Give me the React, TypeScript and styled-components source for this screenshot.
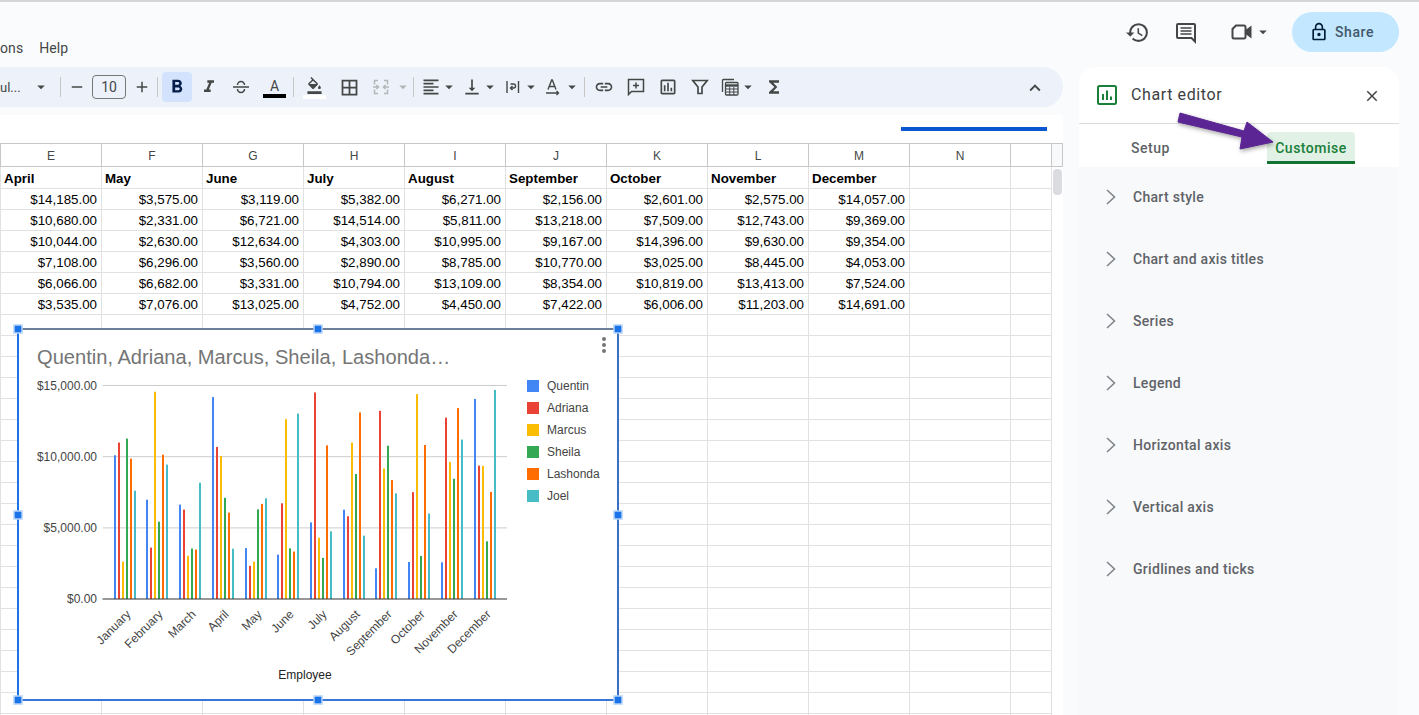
import React from 'react';
import styled, {createGlobalStyle} from 'styled-components';
import {
  MdAdd, MdArrowDropDown, MdBorderAll, MdClose, MdExpandLess, MdFormatAlignLeft,
  MdFormatBold, MdFormatColorFill, MdFormatItalic, MdFunctions, MdHistory, MdLink, MdLockOutline,
  MdOutlineInsertChart, MdRemove, MdVerticalAlignBottom,
} from 'react-icons/md';

const GlobalStyle = createGlobalStyle`
  html, body {
    margin: 0;
    height: 100%;
    overflow: hidden;
    background: #f9fbfd;
    font-family: "Roboto", "Liberation Sans", sans-serif;
  }
`

const Page = styled.div`
  width: 1419px;
  height: 715px;
  display: flex;
  flex-direction: column;
  overflow: hidden;
  border-top: 2px solid #d3d5d8;
  box-sizing: border-box;
  position: relative;
`

const TopBar = styled.div`
  height: 65px;
  flex: none;
  display: flex;
`

const MenuArea = styled.div`
  width: 1079px;
  display: flex;
  align-items: flex-end;
  padding-bottom: 11px;
  box-sizing: border-box;
  font-size: 14px;
  letter-spacing: .1px;
  color: #444746;
  gap: 16px;
`

const Actions = styled.div`
  flex: 1;
  display: flex;
  align-items: flex-start;
  padding: 10px 20px 0 0;
  box-sizing: border-box;
  justify-content: flex-end;
  color: #444746;
`

const ActionIcon = styled.div<{$w: number}>`
  width: ${p => p.$w}px;
  height: 40px;
  display: flex;
  align-items: center;
  font-size: 25px;
`

const ShareButton = styled.div`
  width: 107px;
  height: 40px;
  border-radius: 20px;
  background: #c2e7ff;
  display: flex;
  align-items: center;
  justify-content: center;
  gap: 6px;
  padding-right: 8px;
  box-sizing: border-box;
  font-size: 14px;
  font-weight: 500;
  letter-spacing: .6px;
  color: #41586b;
  svg { color: #001d35; }
`

const Body = styled.div`
  flex: 1;
  display: flex;
  min-height: 0;
`

const Sheet = styled.div`
  width: 1063px;
  flex: none;
  display: flex;
  flex-direction: column;
`

const Toolbar = styled.div`
  height: 40px;
  flex: none;
  background: #edf2fa;
  border-radius: 0 20px 20px 0;
  display: flex;
  align-items: center;
  color: #444746;
  position: relative;
`

const FontName = styled.span`
  width: 33px;
  flex: none;
  font-size: 13px;
`

const Sep = styled.div<{$ml?: number}>`
  width: 1px;
  height: 20px;
  background: #c7c7c7;
  flex: none;
  margin-left: ${p => p.$ml ?? 0}px;
`

const Tool = styled.div<{$w?: number; $ml?: number; $on?: boolean; $off?: boolean}>`
  width: ${p => p.$w ?? 32}px;
  margin-left: ${p => p.$ml ?? 0}px;
  height: 30px;
  flex: none;
  display: flex;
  align-items: center;
  justify-content: center;
  border-radius: 4px;
  font-size: 20px;
  background: ${p => p.$on ? '#d3e3fd' : 'transparent'};
  color: ${p => p.$on ? '#041e49' : p.$off ? '#b4b6b8' : '#444746'};
`

const Caret = styled(MdArrowDropDown)`
  font-size: 18px;
  flex: none;
`

const SizeBox = styled.div`
  width: 34px;
  height: 24px;
  border: 1px solid #747775;
  border-radius: 4px;
  box-sizing: border-box;
  display: flex;
  align-items: center;
  justify-content: center;
  font-size: 14px;
  flex: none;
`

const ColorGlyph = styled.div<{$bar: string}>`
  width: 23px;
  margin-top: 2px;
  display: flex;
  flex-direction: column;
  align-items: center;
  font-size: 14px;
  line-height: 14px;
  color: #444746;
  &::after {
    content: "";
    width: 100%;
    height: 4px;
    background: ${p => p.$bar};
    margin-top: 1px;
  }
`

const Collapse = styled.div`
  position: absolute;
  right: 17px;
  top: 10px;
  font-size: 22px;
  height: 22px;
`

const FormulaBar = styled.div`
  height: 28px;
  margin-top: 8px;
  flex: none;
  background: #fff;
  display: flex;
  align-items: flex-end;
  justify-content: flex-end;
  padding: 0 16px 12px 0;
  box-sizing: border-box;
`

const Progress = styled.div`
  width: 146px;
  height: 4px;
  background: #0b57d0;
`

const GridWrap = styled.div`
  flex: 1;
  position: relative;
  overflow: hidden;
  background: #fff;
  min-height: 0;
`

const HeaderRow = styled.div`
  display: flex;
  height: 24px;
  box-sizing: border-box;
  border-top: 1px solid #c7c7c7;
  border-bottom: 1px solid #c7c7c7;
  border-left: 1px solid #c7c7c7;
`

const HeaderCell = styled.div<{$w?: number; $plain?: boolean}>`
  width: ${p => p.$w ?? 101}px;
  flex: none;
  box-sizing: border-box;
  border-right: 1px solid #c7c7c7;
  font: 12px "Liberation Sans", sans-serif;
  color: #444746;
  line-height: 24px;
  text-align: center;
  background: ${p => p.$plain ? '#f8f9fa' : '#fff'};
`

const Row = styled.div<{$h?: number}>`
  display: flex;
  height: ${p => p.$h ?? 21}px;
  box-sizing: border-box;
  border-bottom: 1px solid #e1e1e1;
  border-left: 1px solid #e1e1e1;
`

const Cell = styled.div<{$bold?: boolean; $w?: number}>`
  width: ${p => p.$w ?? 101}px;
  flex: none;
  box-sizing: border-box;
  border-right: 1px solid #e1e1e1;
  padding: 0 4px 0 3px;
  font: ${p => p.$bold ? 'bold' : 'normal'} 13.33px "Liberation Sans", sans-serif;
  color: #000;
  line-height: ${p => p.$bold ? 23 : 22}px;
  text-align: ${p => p.$bold ? 'left' : 'right'};
  white-space: nowrap;
  overflow: hidden;
`

const Rail = styled.div`
  position: absolute;
  right: 0;
  top: 24px;
  bottom: 0;
  width: 12px;
  background: #fff;
  border-left: 1px solid #e1e1e1;
  box-sizing: border-box;
`

const Thumb = styled.div`
  width: 9px;
  height: 26px;
  margin: 2px 0 0 1px;
  border-radius: 4px;
  background: #dadce0;
`

const ChartBox = styled.div`
  position: absolute;
  left: 18px;
  top: 186px;
  width: 600px;
  height: 371px;
  background: #fff;
  &::after {
    content: "";
    position: absolute;
    inset: -1px;
    border-style: solid;
    border-width: 2px;
    border-color: #6d7f99 #3b6fc4 #3b76d6 #1a73e8;
  }
`

const Handle = styled.div<{$x: number; $y: number}>`
  position: absolute;
  z-index: 1;
  width: 7px;
  height: 7px;
  background: #1a73e8;
  border: 1px solid #fff;
  left: ${p => p.$x}%;
  top: ${p => p.$y}%;
  transform: translate(-50%, -50%);
`

const ChartSvg = styled.svg`
  position: absolute;
  left: 0;
  top: 0;
  display: block;
`

const Panel = styled.div`
  width: 320px;
  margin-left: 16px;
  flex: none;
  display: flex;
  flex-direction: column;
  background: #f8f9fa;
  border-radius: 16px 16px 0 0;
  overflow: hidden;
`

const PanelHead = styled.div`
  height: 57px;
  flex: none;
  background: #fff;
  display: flex;
  align-items: center;
  border-bottom: 1px solid #dadce0;
  box-sizing: border-box;
  padding: 0 18px;
`

const PanelTitle = styled.span`
  font-size: 16px;
  letter-spacing: .6px;
  color: #3c4043;
  margin: -2px 0 0 14px;
  flex: 1;
`

const CloseIcon = styled(MdClose)`
  font-size: 18px;
  color: #444746;
  margin-top: 2px;
`

const Tabs = styled.div`
  height: 43px;
  flex: none;
  background: #fff;
  display: flex;
  align-items: flex-end;
  padding-left: 52px;
  font-size: 14px;
  letter-spacing: .5px;
  color: #5f6368;
`

const Tab = styled.div<{$active?: boolean}>`
  height: 32px;
  box-sizing: border-box;
  line-height: 32px;
  width: ${p => p.$active ? '88px' : '136px'};
  text-align: ${p => p.$active ? 'center' : 'left'};
  margin-bottom: 3px;
  font-weight: 500;
  color: ${p => p.$active ? '#188038' : '#5f6368'};
  background: ${p => p.$active ? '#e2f1e5' : 'transparent'};
  border-radius: 4px 4px 0 0;
  border-bottom: ${p => p.$active ? '3px solid #137333' : 'none'};
`

const Section = styled.div`
  height: 62px;
  flex: none;
  display: flex;
  align-items: center;
  gap: 17px;
  padding: 0 0 2px 27px;
  box-sizing: border-box;
  font-size: 14px;
  font-weight: 500;
  letter-spacing: .3px;
  color: #5f6368;
`

const ArrowSvg = styled.svg`
  position: absolute;
  left: 1170px;
  top: 103px;
  filter: drop-shadow(1px 2px 2px rgba(0, 0, 0, .35));
`

const columns = ['E', 'F', 'G', 'H', 'I', 'J', 'K', 'L', 'M', 'N']
const months = ['April', 'May', 'June', 'July', 'August', 'September', 'October', 'November', 'December']

const table = [
  [14185, 3575, 3119, 5382, 6271, 2156, 2601, 2575, 14057],
  [10680, 2331, 6721, 14514, 5811, 13218, 7509, 12743, 9369],
  [10044, 2630, 12634, 4303, 10995, 9167, 14396, 9630, 9354],
  [7108, 6296, 3560, 2890, 8785, 10770, 3025, 8445, 4053],
  [6066, 6682, 3331, 10794, 13109, 8354, 10819, 13413, 7524],
  [3535, 7076, 13025, 4752, 4450, 7422, 6006, 11203, 14691],
]

// first quarter is off screen in the sheet, read from the bars
const firstMonths = [
  [10100, 6980, 6630],
  [10990, 3610, 6280],
  [2630, 14560, 3040],
  [11270, 5430, 3540],
  [9860, 10140, 3470],
  [7610, 9440, 8170],
]

const series = [
  {name: 'Quentin', color: '#4285f4'},
  {name: 'Adriana', color: '#ea4335'},
  {name: 'Marcus', color: '#fbbc04'},
  {name: 'Sheila', color: '#34a853'},
  {name: 'Lashonda', color: '#ff6d01'},
  {name: 'Joel', color: '#46bdc6'},
]

const sections = ['Chart style', 'Chart and axis titles', 'Series', 'Legend', 'Horizontal axis', 'Vertical axis', 'Gridlines and ticks']
const handles = [[0, 0], [50, 0], [100, 0], [0, 50], [100, 50], [0, 100], [50, 100], [100, 100]]

const chartMonths = ['January', 'February', 'March', ...months]
const money = (n: number) => '$' + n.toLocaleString('en-US', {minimumFractionDigits: 2})

const baseY = 270
const topY = 56.5
const barHeight = (v: number) => v * (baseY - topY) / 15000

const ChartDrawing = () => (
  <ChartSvg width={600} height={371} viewBox="0 0 600 371" fontFamily='"Liberation Sans", sans-serif'>
    <text x={19} y={35} fontSize={20.1} fill="#757575">Quentin, Adriana, Marcus, Sheila, Lashonda…</text>
    <circle cx={586} cy={10} r={2} fill="#757575" />
    <circle cx={586} cy={16} r={2} fill="#757575" />
    <circle cx={586} cy={22} r={2} fill="#757575" />
    {[0, 1, 2].map(i => (
      <line key={i} x1={84.5} x2={489} y1={topY + i * 71.2} y2={topY + i * 71.2} stroke="#cccccc" strokeWidth={1} />
    ))}
    {['$15,000.00', '$10,000.00', '$5,000.00', '$0.00'].map((t, i) => (
      <text key={t} x={79} y={topY + 4 + i * 71.2} fontSize={12} textAnchor="end" fill="#444">{t}</text>
    ))}
    {chartMonths.map((m, mi) => {
      const gx = Math.floor(96 + mi * 32.73 + 0.1)
      return (
        <g key={m}>
          {series.map((s, si) => {
            const v = mi < 3 ? firstMonths[si][mi] : table[si][mi - 3]
            const h = barHeight(v)
            return <rect key={s.name} x={gx + si * 4} y={baseY - h} width={2} height={h} fill={s.color} />
          })}
          <text
            x={gx + 17.5}
            y={baseY + 16}
            fontSize={12}
            textAnchor="end"
            fill="#444"
            transform={`rotate(-45 ${gx + 17.5} ${baseY + 16})`}
          >{m}</text>
        </g>
      )
    })}
    <line x1={84.5} x2={489} y1={baseY} y2={baseY} stroke="#333" strokeWidth={1.2} />
    {series.map((s, i) => (
      <g key={s.name}>
        <rect x={509} y={51 + i * 22} width={12} height={12} fill={s.color} />
        <text x={529} y={61 + i * 22} fontSize={12} fill="#444">{s.name}</text>
      </g>
    ))}
    <text x={287} y={350} fontSize={12} textAnchor="middle" fill="#222">Employee</text>
  </ChartSvg>
)

const Line18 = ({d, w = 1.5}: {d: string; w?: number}) => (
  <svg width="18" height="18" viewBox="0 0 18 18" fill="none" stroke="currentColor" strokeWidth={w}>
    <path d={d} />
  </svg>
)

const CommentsIcon = () => (
  <svg width="24" height="24" viewBox="0 0 24 24" fill="none" stroke="currentColor" strokeWidth="2">
    <path d="M4 4H20a1 1 0 0 1 1 1V21.5L17.5 18H4a1 1 0 0 1-1-1V5a1 1 0 0 1 1-1Z" />
    <path d="M6.5 8h11M6.5 11h11M6.5 14h11" strokeWidth="1.6" />
  </svg>
)

const MeetIcon = () => (
  <svg width="24" height="24" viewBox="0 0 24 24" fill="none" stroke="currentColor" strokeWidth="2">
    <path d="M6 5.5 2.5 9v8a1.5 1.5 0 0 0 1.5 1.500h10a1.500 1.500 0 0 0 1.500-1.500V7A1.500 1.500 0 0 0 14 5.500Z" />
    <path d="M15.5 10 21.5 5.5v13L15.5 14Z" fill="currentColor" stroke="none" />
  </svg>
)

const CalcIcon = () => (
  <svg width="18" height="18" viewBox="0 0 18 18" fill="none" stroke="currentColor" strokeWidth="1.3">
    <path d="M1.5 14V2.5a1 1 0 0 1 1-1H13" />
    <rect x="4.5" y="4.5" width="12.5" height="12.5" rx="1" />
    <path d="M4.5 7.5h12.5" strokeWidth="2.4" />
    <path d="M4.5 11h12.5M4.5 14h12.5M8.7 9v8M12.8 9v8" strokeWidth="1" />
  </svg>
)

const SheetsChartIcon = () => (
  <svg width="20" height="20" viewBox="0 0 20 20" fill="none">
    <rect x="1" y="1" width="18" height="18" rx="1.5" stroke="#188038" strokeWidth="2" />
    <path d="M6 9v6M10 5.5v9.5M14 11.5v3.5" stroke="#188038" strokeWidth="2" />
  </svg>
)

const Chevron = () => (
  <svg width="10" height="16" viewBox="0 0 10 16" fill="none" stroke="#80868b" strokeWidth="1.6">
    <path d="M1 1 8.5 8 1 15" />
  </svg>
)

const App = () => {
  const rows = 26
  return (
    <Page>
      <GlobalStyle />
      <TopBar>
        <MenuArea>
          <span>ons</span>
          <span>Help</span>
        </MenuArea>
        <Actions>
          <ActionIcon $w={49}><MdHistory /></ActionIcon>
          <ActionIcon $w={56}><CommentsIcon /></ActionIcon>
          <ActionIcon $w={62}><MeetIcon /><Caret /></ActionIcon>
          <ShareButton><MdLockOutline size={20} />Share</ShareButton>
        </Actions>
      </TopBar>
      <Body>
        <Sheet>
          <Toolbar>
            <FontName>ul...</FontName>
            <Tool $w={16}><Caret /></Tool>
            <Sep $ml={11} />
            <Tool $w={31}><MdRemove size={18} /></Tool>
            <SizeBox>10</SizeBox>
            <Tool $w={31}><MdAdd size={18} /></Tool>
            <Sep />
            <Tool $w={30} $ml={4} $on><MdFormatBold size={22} /></Tool>
            <Tool $w={34}><MdFormatItalic /></Tool>
            <Tool $w={30}>
              <Line18 d="M1 9h16M5.5 7a3.5 3.5 0 0 1 7 0M5.5 11a3.5 3.5 0 0 0 7 0" />
            </Tool>
            <Tool $w={37}><ColorGlyph $bar="#000">A</ColorGlyph></Tool>
            <Sep />
            <Tool $w={41}><ColorGlyph $bar="#fff"><MdFormatColorFill size={17} /></ColorGlyph></Tool>
            <Tool $w={29}><MdBorderAll size={21} /></Tool>
            <Tool $w={34} $off>
              <Line18 d="M6 2.5H2.5v4M12 2.5h3.5v4M6 15.5H2.5v-4M12 15.5h3.5v-4M1 9h5M17 9h-5M4.5 7l2 2-2 2M13.5 7l-2 2 2 2" />
            </Tool>
            <Tool $w={10} $off><Caret /></Tool>
            <Sep $ml={5} />
            <Tool $w={30} $ml={2}><MdFormatAlignLeft /></Tool>
            <Tool $w={6}><Caret /></Tool>
            <Tool $w={30} $ml={5}><MdVerticalAlignBottom /></Tool>
            <Tool $w={6}><Caret /></Tool>
            <Tool $w={30} $ml={5}>
              <Line18 w={1.4} d="M3 3v12M14.5 3v12M6.5 6h3a2 2 0 0 1 2 2v0a2 2 0 0 1-2 2H6.5M8.5 8l-2 2 2 2" />
            </Tool>
            <Tool $w={6}><Caret /></Tool>
            <Tool $w={28} $ml={5}>
              <Line18 w={1.4} d="M4 11.5 7.7 2h.6l3.7 9.5M5.2 8.5h5.6M2 15h12M12.5 13l2 2-2 2" />
            </Tool>
            <Tool $w={10}><Caret /></Tool>
            <Sep $ml={7} />
            <Tool $w={38}><MdLink /></Tool>
            <Tool $w={26}><Line18 d="M1.5 1.5h15v12h-12l-3 3zM9 4.5v6M6 7.500h6" /></Tool>
            <Tool $w={38}><MdOutlineInsertChart /></Tool>
            <Tool $w={26}><Line18 w={1.7} d="M1.8 2.5h14.4L11 9v6.5H7V9z" /></Tool>
            <Tool $w={26} $ml={4}><CalcIcon /></Tool>
            <Tool $w={10}><Caret /></Tool>
            <Tool $w={42}><MdFunctions /></Tool>
            <Collapse><MdExpandLess /></Collapse>
          </Toolbar>
          <FormulaBar><Progress /></FormulaBar>
          <GridWrap>
            <HeaderRow>
              {columns.map(c => <HeaderCell key={c}>{c}</HeaderCell>)}
              <HeaderCell $w={41} />
              <HeaderCell $w={11} $plain />
            </HeaderRow>
            <Row $h={22}>
              {months.map(m => <Cell key={m} $bold>{m}</Cell>)}
              <Cell /><Cell $w={41} />
            </Row>
            {table.map((r, i) => (
              <Row key={i}>
                {r.map((v, j) => <Cell key={j}>{money(v)}</Cell>)}
                <Cell /><Cell $w={41} />
              </Row>
            ))}
            {Array.from({length: rows}).map((_, i) => (
              <Row key={i}>
                {columns.map(c => <Cell key={c} />)}
                <Cell $w={41} />
              </Row>
            ))}
            <Rail><Thumb /></Rail>
            <ChartBox>
              <ChartDrawing />
              {handles.map(([x, y]) => <Handle key={`${x}-${y}`} $x={x} $y={y} />)}
            </ChartBox>
          </GridWrap>
        </Sheet>
        <Panel>
          <PanelHead>
            <SheetsChartIcon />
            <PanelTitle>Chart editor</PanelTitle>
            <CloseIcon />
          </PanelHead>
          <Tabs>
            <Tab>Setup</Tab>
            <Tab $active>Customise</Tab>
          </Tabs>
          <div>
            {sections.map(s => <Section key={s}><Chevron />{s}</Section>)}
          </div>
        </Panel>
      </Body>
      <ArrowSvg width="110" height="50" viewBox="0 0 110 50">
        <path d="M10 8 74 26 77 17 103 37 70 44 72 32 8 17Z" fill="#5b2594" stroke="#5b2594" strokeWidth="1" strokeLinejoin="round" />
      </ArrowSvg>
    </Page>
  )
}

export default App
